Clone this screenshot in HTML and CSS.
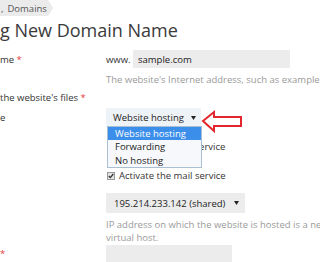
FILE: index.html
```html
<!DOCTYPE html>
<html lang="en">
<head>
<meta charset="utf-8">
<title>Adding New Domain Name</title>
<link rel="stylesheet" href="styles.css">
</head>
<body>
<div class="page">
  <div class="crumb"><span class="crumb-mark">,</span>Domains</div>
  <h1 class="title">g New Domain Name</h1>
  <div class="form">
    <div class="row row-domain">
      <div class="label">me <span class="req">*</span></div>
      <div class="field">
        <span class="prefix">www.</span>
        <div class="input input-domain">sample.com</div>
      </div>
    </div>
    <div class="row row-help">
      <div></div>
      <div class="help">The website's Internet address, such as example.com</div>
    </div>
    <div class="section">the website's files <span class="req">*</span></div>
    <div class="row row-hosting">
      <div class="label">e</div>
      <div class="field">
        <div class="select-wrap">
          <div class="select select-hosting">
            <span>Website hosting</span>
            <svg class="caret" width="5" height="4" viewBox="0 0 5 4"><polygon points="0,0 5,0 2.5,4" fill="#222"/></svg>
          </div>
          <ul class="dropdown">
            <li class="option option-active">Website hosting</li>
            <li class="option">Forwarding</li>
            <li class="option">No hosting</li>
          </ul>
          <svg class="callout" width="44" height="25" viewBox="0 0 44 25">
            <polygon points="3,12 14,3 14,8 41,8 41,17 14,17 14,22" fill="#fff" stroke="#e3262b" stroke-width="2" stroke-linejoin="miter"/>
          </svg>
        </div>
      </div>
    </div>
    <div class="row row-check1">
      <div></div>
      <div class="check">
        <svg class="box" width="8" height="8" viewBox="0 0 8 8"><rect x="0.5" y="0.5" width="7" height="7" fill="#e4e4e4" stroke="#9a9a9a"/><path d="M1.8 4 L3.3 5.6 L6.3 2" fill="none" stroke="#333" stroke-width="1.3"/></svg>
        <span>Activate the web service</span>
      </div>
    </div>
    <div class="row row-check2">
      <div></div>
      <div class="check">
        <svg class="box" width="8" height="8" viewBox="0 0 8 8"><rect x="0.5" y="0.5" width="7" height="7" fill="#e4e4e4" stroke="#9a9a9a"/><path d="M1.8 4 L3.3 5.6 L6.3 2" fill="none" stroke="#333" stroke-width="1.3"/></svg>
        <span>Activate the mail service</span>
      </div>
    </div>
    <div class="row row-ip">
      <div></div>
      <div class="field">
        <div class="select select-ip">
          <span>195.214.233.142 (shared)</span>
          <svg class="caret" width="5" height="4" viewBox="0 0 5 4"><polygon points="0,0 5,0 2.5,4" fill="#222"/></svg>
        </div>
      </div>
    </div>
    <div class="row row-help2">
      <div></div>
      <div class="help">IP address on which the website is hosted is a new<br>virtual host.</div>
    </div>
    <div class="row row-last">
      <div class="label"><span class="req">*</span></div>
      <div class="field">
        <div class="input input-last"></div>
      </div>
    </div>
  </div>
</div>
</body>
</html>
```

FILE: styles.css
```css
html, body {
  margin: 0;
  padding: 0;
  background: #ffffff;
  overflow: hidden;
}

body {
  font-family: "Open Sans", "Liberation Sans", sans-serif;
  font-size: 9.5px;
  color: #333333;
}

.page {
  width: 320px;
  height: 262px;
}

.crumb {
  display: flex;
  align-items: center;
  width: 53px;
  height: 16px;
  padding-left: 1px;
  box-sizing: border-box;
  background: #ebebeb;
  color: #555555;
  font-size: 9.5px;
  clip-path: polygon(0 0, 48px 0, 53px 50%, 48px 100%, 0 100%);
}

.crumb-mark {
  margin-right: 4px;
}

.title {
  margin: 2px 0 0;
  font-size: 18px;
  line-height: 24px;
  font-weight: 400;
  color: #3a3a3a;
}

.form {
  display: flex;
  flex-direction: column;
}

.row {
  display: grid;
  grid-template-columns: 106px 1fr;
  align-items: center;
}

.label {
  color: #333333;
  line-height: 13px;
}

.req {
  color: #e23a3a;
}

.field {
  display: flex;
  align-items: center;
}

.prefix {
  width: 27px;
  color: #333333;
}

.input {
  box-sizing: border-box;
  background: #ececec;
  color: #222222;
  padding-left: 5px;
  display: flex;
  align-items: center;
}

.row-domain {
  margin-top: 8px;
  height: 18px;
}

.input-domain {
  width: 157px;
  height: 18px;
}

.help {
  color: #9a9a9a;
  line-height: 13px;
  white-space: nowrap;
}

.row-help {
  margin-top: 5px;
}

.section {
  margin-top: 5px;
  line-height: 13px;
}

.row-hosting {
  margin-top: 4px;
}

.select-wrap {
  position: relative;
}

.select {
  box-sizing: border-box;
  height: 19px;
  display: flex;
  align-items: center;
  justify-content: space-between;
  padding: 0 5px 0 7px;
  color: #222222;
}

.select-hosting {
  width: 95px;
  background: #eef3f8;
}

.dropdown {
  position: absolute;
  top: 18px;
  left: 1px;
  width: 95px;
  margin: 0;
  padding: 0;
  list-style: none;
  box-sizing: border-box;
  border: 1px solid #a9bfd4;
  background: #f6f8fb;
}

.option {
  height: 13.3px;
  line-height: 13.3px;
  padding-left: 7px;
  color: #222222;
}

.option-active {
  background: #3b8eea;
  color: #ffffff;
}

.callout {
  position: absolute;
  left: 94px;
  top: 1px;
}

.check {
  display: flex;
  align-items: center;
  gap: 4px;
  padding-left: 1px;
  line-height: 14px;
  color: #333333;
}

.row-check1 {
  margin-top: 13px;
}

.row-check2 {
  margin-top: 15px;
}

.row-ip {
  margin-top: 10px;
}

.select-ip {
  width: 139px;
  height: 20px;
  background: #ececec;
  padding: 0 6px 0 8px;
}

.row-help2 {
  margin-top: 5px;
}

.row-last {
  margin-top: 1px;
  align-items: start;
}

.row-last .label {
  margin-top: 2px;
}

.input-last {
  width: 126px;
  height: 20px;
}
```
